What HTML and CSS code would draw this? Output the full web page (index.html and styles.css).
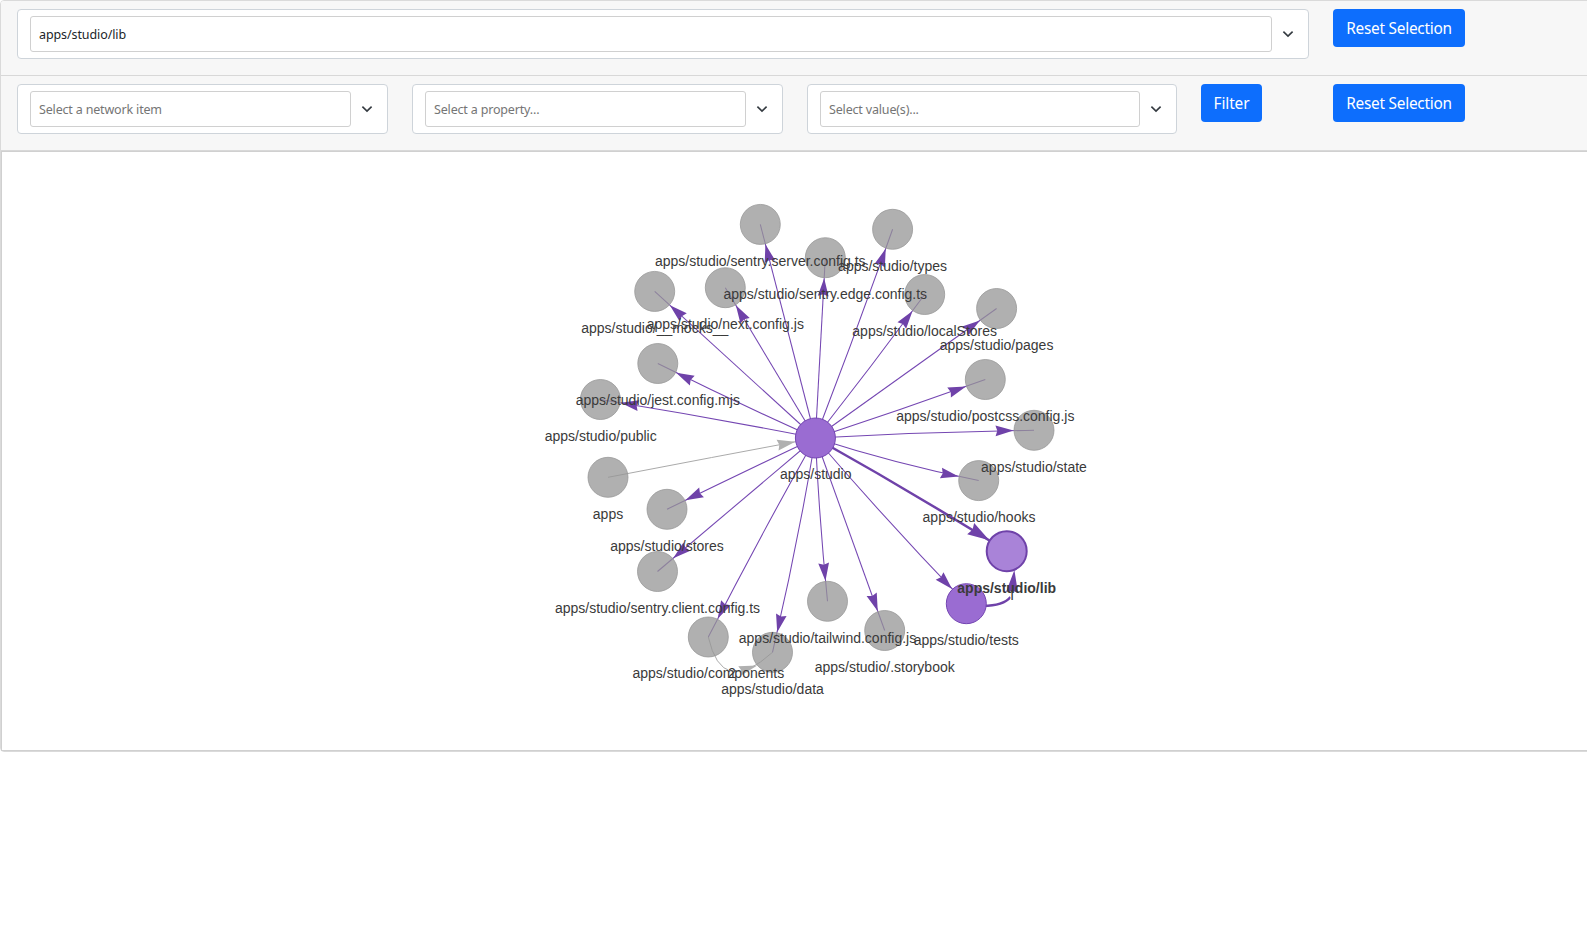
FILE: index.html
```html
<!DOCTYPE html>
<html lang="en">
<head>
<meta charset="utf-8">
<title>Network</title>
<link rel="stylesheet" href="styles.css">
</head>
<body>
<div class="card">
  <div class="card-header">
    <div class="row row-select">
      <div class="col"><div class="select"><div class="control value">apps/studio/lib</div><svg class="chevron" viewBox="0 0 12 8"><path d="M1.4 1.6 6 6.1l4.6-4.5"/></svg></div></div>
      <div class="col"><button class="btn">Reset Selection</button></div>
    </div>
  </div>
  <div class="card-header last">
    <div class="row row-filter">
      <div class="col"><div class="select"><div class="control">Select a network item</div><svg class="chevron" viewBox="0 0 12 8"><path d="M1.4 1.6 6 6.1l4.6-4.5"/></svg></div></div>
      <div class="col"><div class="select"><div class="control">Select a property...</div><svg class="chevron" viewBox="0 0 12 8"><path d="M1.4 1.6 6 6.1l4.6-4.5"/></svg></div></div>
      <div class="col"><div class="select"><div class="control">Select value(s)...</div><svg class="chevron" viewBox="0 0 12 8"><path d="M1.4 1.6 6 6.1l4.6-4.5"/></svg></div></div>
      <div class="col"><button class="btn btn-filter">Filter</button></div>
      <div class="col"><button class="btn">Reset Selection</button></div>
    </div>
  </div>
  <div class="network">
    <svg class="graph" viewBox="2 152 1585 598">
      <defs>
        <marker id="arrow" class="head" markerUnits="userSpaceOnUse" markerWidth="20" markerHeight="20" orient="auto"><path d="M-20.5 0-38.5 5.4-36.7 0-38.5-5.4z"/></marker>
        <marker id="arrow-thick" class="head" markerUnits="userSpaceOnUse" markerWidth="20" markerHeight="20" orient="auto"><path d="M-20.5 0-42.5 6.6-40.3 0-42.5-6.6z"/></marker>
        <marker id="arrow-grey" class="head dim" markerUnits="userSpaceOnUse" markerWidth="20" markerHeight="20" orient="auto"><path d="M-20.5 0-38.5 5.4-36.7 0-38.5-5.4z"/></marker>
      </defs>
      <g class="edge-dim">
        <path marker-end="url(#arrow-grey)" d="M608 477.3Q711 457.5 815.4 438"/>
        <path d="M708.3 637Q722 698 772.5 652.3"/>
        <path class="tip" d="M757.3 665.5 741.5 675.2 741.3 670.2 738.3 666.2z"/>
      </g>
      <g class="edge">
        <path d="M815.4 438 760.3 224.4"/>
        <path d="M815.4 438 654.7 291.4"/>
        <path d="M815.4 438 725.3 287.7"/>
        <path d="M815.4 438Q736 402.5 657.8 363.5"/>
        <path d="M815.4 438Q708 417 600.4 399.5"/>
        <path d="M815.4 438 825.3 257.7"/>
        <path d="M815.4 438Q855.5 334 892.6 229.3"/>
        <path d="M815.4 438Q871 367 924.7 294.5"/>
        <path d="M815.4 438 996.6 308.5"/>
        <path d="M815.4 438Q900.4 410 985.3 379.5"/>
        <path d="M815.4 438Q924.7 432 1034 430.3"/>
        <path d="M815.4 438Q897 464.3 978.7 480.6"/>
        <path d="M815.4 438Q888.5 523 966.3 603.7"/>
        <path d="M815.4 438 884.7 630.5"/>
        <path d="M815.4 438Q819.3 519.7 827.5 601.3"/>
        <path d="M815.4 438Q797.5 546 772.5 652.3"/>
        <path d="M815.4 438Q760 536.5 708.3 637"/>
        <path d="M815.4 438 657.5 571.5"/>
        <path d="M815.4 438Q742 472.5 667 509.3"/>
      </g>
      <g class="edge-thick">
        <path marker-end="url(#arrow-thick)" d="M815.4 438Q912 492 1006.7 551.2"/>
        <path d="M966.3 604.7Q1001 609 1010.5 597"/>
      </g>
      <g class="edge-label">
        <text class="plain" x="1011.6" y="600">1</text>
        <text x="731.8" y="677.7">2</text>
      </g>
      <g class="edge-thick">
        <path class="tip" d="M1014.4 570 1006 592 1012 590.5 1018 593z"/>
      </g>
      <g class="dim-nodes">
        <circle cx="760.3" cy="224.4" r="20"/><circle cx="654.7" cy="291.4" r="20"/>
        <circle cx="725.3" cy="287.7" r="20"/><circle cx="657.8" cy="363.5" r="20"/>
        <circle cx="600.4" cy="399.5" r="20"/><circle cx="825.3" cy="257.7" r="20"/>
        <circle cx="892.6" cy="229.3" r="20"/><circle cx="924.7" cy="294.5" r="20"/>
        <circle cx="996.6" cy="308.5" r="20"/><circle cx="985.3" cy="379.5" r="20"/>
        <circle cx="1034" cy="430.3" r="20"/><circle cx="978.7" cy="480.6" r="20"/>
        <circle cx="884.7" cy="630.5" r="20"/><circle cx="827.5" cy="601.3" r="20"/>
        <circle cx="772.5" cy="652.3" r="20"/><circle cx="708.3" cy="637" r="20"/>
        <circle cx="657.5" cy="571.5" r="20"/><circle cx="667" cy="509.3" r="20"/>
        <circle cx="608" cy="477.3" r="20"/>
      </g>
      <g class="nodes">
        <circle cx="815.4" cy="438" r="20"/><circle cx="966.3" cy="603.7" r="20"/>
        <circle class="selected" cx="1006.7" cy="551.2" r="20"/>
      </g>
      <g class="labels">
        <text x="760.3" y="266">apps/studio/sentry.server.config.ts</text>
        <text x="654.7" y="333">apps/studio/__mocks__</text>
        <text x="725.3" y="329">apps/studio/next.config.js</text>
        <text x="657.8" y="405">apps/studio/jest.config.mjs</text>
        <text x="600.7" y="441">apps/studio/public</text>
        <text x="825.3" y="299">apps/studio/sentry.edge.config.ts</text>
        <text x="892.6" y="271">apps/studio/types</text>
        <text x="924.7" y="336">apps/studio/localStores</text>
        <text x="996.6" y="350">apps/studio/pages</text>
        <text x="985.3" y="421">apps/studio/postcss.config.js</text>
        <text x="1034" y="472">apps/studio/state</text>
        <text x="979" y="522">apps/studio/hooks</text>
        <text x="966.3" y="645">apps/studio/tests</text>
        <text x="884.7" y="672">apps/studio/.storybook</text>
        <text x="827.5" y="643">apps/studio/tailwind.config.js</text>
        <text x="772.5" y="694">apps/studio/data</text>
        <text x="708.3" y="678">apps/studio/components</text>
        <text x="657.5" y="613">apps/studio/sentry.client.config.ts</text>
        <text x="667" y="551">apps/studio/stores</text>
        <text x="608" y="519">apps</text>
        <text x="815.7" y="479">apps/studio</text>
        <text class="bold" x="1006.7" y="593">apps/studio/lib</text>
      </g>
    </svg>
  </div>
</div>
</body>
</html>
```
FILE: styles.css
```css
* { box-sizing: border-box; }
body { margin: 0; background: #fff; font-family: "Noto Sans", sans-serif; color: #212529; overflow: hidden; }
.card { width: 1600px; border: 1px solid #dadada; border-radius: 4px; }
.card-header { height: 75px; padding: 8px 0 0 4px; background: #f7f7f7; border-bottom: 1px solid #d8d8d8; }
.card-header:first-child { border-radius: 3px 3px 0 0; }
.row { display: grid; align-items: start; }
.row-select { grid-template-columns: 1316px 264px; }
.row-filter { grid-template-columns: 395px 395px 394px 132px 264px; }
.col { padding: 0 12px; min-width: 0; }
.select { display: flex; align-items: center; height: 50px; padding: 0 14px 0 12px; background: #fff; border: 1px solid #ced4da; border-radius: 4px; }
.control { flex: 1; height: 36px; padding: 0 8px; border: 1px solid #d0d0d0; border-radius: 3px; font-size: 12.5px; line-height: 36px; letter-spacing: -0.17px; color: #757575; white-space: nowrap; }
.value { color: #212529; letter-spacing: -0.1px; }
.chevron { width: 12px; height: 8px; margin-left: 10px; fill: none; stroke: #343a40; stroke-width: 1.6; }
.btn { display: block; width: 132px; height: 38px; padding: 2px 0 0; border: 0; border-radius: 4px; background: #0d6efd; color: #fff; font-family: "Noto Sans", sans-serif; font-size: 15.4px; letter-spacing: -0.25px; line-height: 36px; text-align: center; white-space: nowrap; }
.btn-filter { width: 61px; letter-spacing: -0.1px; }
.network { height: 600px; border: 1px solid #d0d0d0; background: #fff; }
.graph { display: block; width: 1585px; height: 598px; font-family: "Liberation Sans", Arial, sans-serif; font-size: 14px; }
.head { overflow: visible; fill: #6f42a9; stroke: none; }
.head.dim { fill: #b0b0b0; }
.edge path { fill: none; stroke: #7446b2; stroke-width: 1.05; marker-end: url(#arrow); }
.edge-dim path { fill: none; stroke: #aaa; stroke-width: 1; }
.edge-thick path { fill: none; stroke: #6f42a9; stroke-width: 2.5; }
.edge-dim .tip { fill: #b0b0b0; stroke: none; }
.edge-thick .tip { fill: #6f42a9; stroke: none; }
.dim-nodes circle { fill: #969696bf; stroke: #969696bf; stroke-width: 1; }
.nodes circle { fill: #9a6cd2; stroke: #7446b2; stroke-width: 1; }
.nodes .selected { fill: #a983d8; stroke: #6f42a9; stroke-width: 2; }
.labels { fill: #3a3a3a; text-anchor: middle; }
.labels .bold { font-weight: 700; }
.edge-label { fill: #343434; stroke: #fff; stroke-width: 2; paint-order: stroke; text-anchor: middle; }
.edge-label .plain { font-family: Roboto, sans-serif; }
```
